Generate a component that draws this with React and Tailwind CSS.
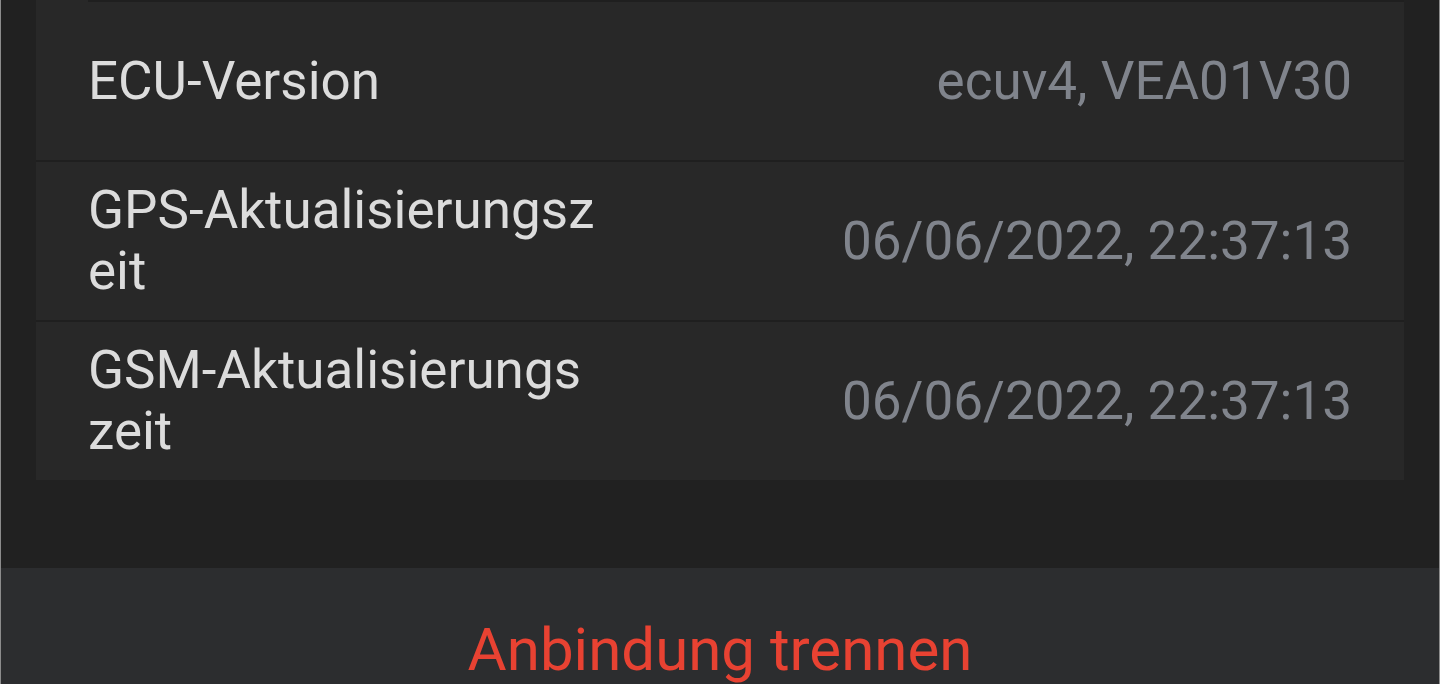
const rows = [
  { label: "ECU-Version", value: "ecuv4, VEA01V30" },
  { label: "GPS-Aktualisierungszeit", value: "06/06/2022, 22:37:13" },
  { label: "GSM-Aktualisierungszeit", value: "06/06/2022, 22:37:13" },
];

function InfoRow({ label, value, first }) {
  return (
    <div
      className={`flex items-center justify-between pl-[52px] pr-[52px] ${
        first ? "h-[158px]" : "border-t-2 border-[#1f1f1f] h-[160px]"
      }`}
    >
      <span className="w-[508px] break-all text-[53px] leading-[61px] text-[#dcdcdc]">
        {label}
      </span>
      <span className="text-[53px] leading-[61px] text-[#80848c] whitespace-nowrap">
        {value}
      </span>
    </div>
  );
}

export default function App() {
  return (
    <div
      className="w-[1440px] h-[684px] overflow-hidden flex flex-col bg-[#212121] border-x border-[#8c8c8c]"
      style={{ fontFamily: "Roboto, 'Noto Sans', sans-serif" }}
    >
      {/* ── Device info card ─────────────────────────────────────────── */}
      <div className="px-[35px] pb-[88px]">
        <div className="bg-[#282828]">
          <div className="ml-[52px] h-[2px] bg-[#1f1f1f]" />
          {rows.map((r, i) => (
            <InfoRow key={r.label} label={r.label} value={r.value} first={i === 0} />
          ))}
        </div>
      </div>

      {/* ── Unbind action ────────────────────────────────────────────── */}
      <button className="flex-1 flex justify-center items-start pt-[52px] bg-[#2c2d2f] text-[60px] leading-[60px] text-[#e84232]">
        Anbindung trennen
      </button>
    </div>
  );
}
